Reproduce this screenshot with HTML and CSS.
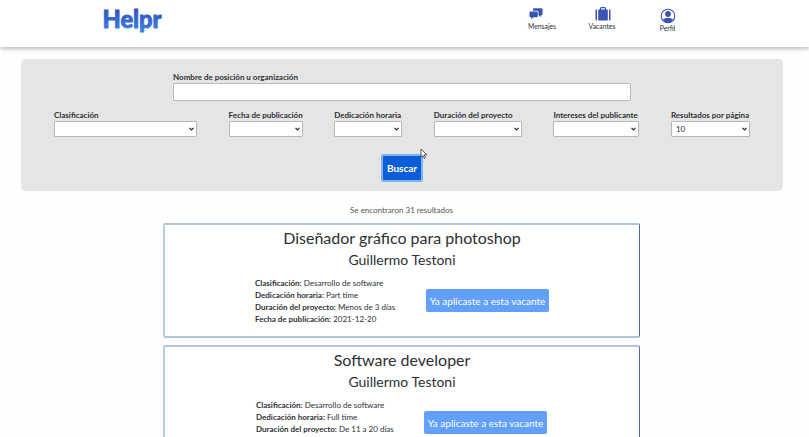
FILE: index.html
```html
<!DOCTYPE html>
<html lang="es">
<head>
<meta charset="utf-8">
<title>Helpr</title>
<link rel="stylesheet" href="styles.css">
</head>
<body>
<header class="header">
  <svg class="logo" width="64" height="32" viewBox="0 0 64 32">
    <defs><linearGradient id="brand" x1="0" y1="0" x2="0" y2="1"><stop offset="0.2" stop-color="#3450b8"/><stop offset="0.6" stop-color="#3767cf"/><stop offset="1" stop-color="#3e86e6"/></linearGradient></defs>
    <text x="1.500" y="22.500" textLength="59" lengthAdjust="spacingAndGlyphs" fill="url(#brand)" stroke="url(#brand)" stroke-width=".9">Helpr</text>
  </svg>
  <nav class="nav">
    <a class="nav-item messages">
      <svg width="14" height="12" viewBox="0 0 14 12"><path fill="#3953b5" d="M5 .3h7.500q1 0 1 1v5q0 1-1 1h-.7v2L9.700 7.300H9.500V4.200q0-1.400-1.400-1.400H4V1.300q0-1 1-1z"/><path fill="#3953b5" d="M1.500 3.500h6.300q1 0 1 1v3.700q0 1-1 1H4.500L2.300 11.300V9.200h-.8q-1 0-1-1V4.500q0-1 1-1z"/></svg>
      <span>Mensajes</span>
    </a>
    <a class="nav-item jobs">
      <svg width="16" height="14" viewBox="0 0 16 14"><path fill="none" stroke="#3953b5" stroke-width="1.200" d="M5.500 3V1.700q0-1 1-1h3q1 0 1 1V3"/><path fill="#3953b5" d="M2 2.500v11h-.5Q.5 13.500.5 12.500v-9q0-1 1-1zM3.200 2.500h9.600v11H3.200zM14 2.500h.5q1 0 1 1v9q0 1-1 1H14z"/></svg>
      <span>Vacantes</span>
    </a>
    <a class="nav-item profile">
      <svg width="16" height="16" viewBox="0 0 16 16"><circle cx="8" cy="8" r="6.800" fill="none" stroke="#3953b5" stroke-width="1.100"/><circle cx="8" cy="6" r="2.900" fill="#3953b5"/><path fill="#3953b5" d="M2.800 12Q4.500 9.800 8 9.800t5.200 2.200Q11.500 14.800 8 14.800T2.800 12z"/></svg>
      <span>Perfil</span>
    </a>
  </nav>
</header>
<main>
  <form class="search">
    <label class="query"><span>Nombre de posición u organización</span><input type="text"></label>
    <div class="filters">
      <label class="field w-class"><span>Clasificación</span><span class="select"><svg viewBox="0 0 5 4"><path d="M.5.8l2 2 2-2"/></svg></span></label>
      <label class="field w-date"><span>Fecha de publicación</span><span class="select"><svg viewBox="0 0 5 4"><path d="M.5.8l2 2 2-2"/></svg></span></label>
      <label class="field w-hours"><span>Dedicación horaria</span><span class="select"><svg viewBox="0 0 5 4"><path d="M.5.8l2 2 2-2"/></svg></span></label>
      <label class="field w-length"><span>Duración del proyecto</span><span class="select"><svg viewBox="0 0 5 4"><path d="M.5.8l2 2 2-2"/></svg></span></label>
      <label class="field w-interest"><span>Intereses del publicante</span><span class="select"><svg viewBox="0 0 5 4"><path d="M.5.8l2 2 2-2"/></svg></span></label>
      <label class="field w-page"><span>Resultados por página</span><span class="select">10<svg viewBox="0 0 5 4"><path d="M.5.8l2 2 2-2"/></svg></span></label>
    </div>
    <button type="button" class="submit">Buscar</button>
  </form>
  <p class="count">Se encontraron 31 resultados</p>
  <section class="results">
    <article class="card">
      <h2>Diseñador gráfico para photoshop</h2>
      <h3>Guillermo Testoni</h3>
      <div class="detail">
        <ul>
          <li><b>Clasificación:</b> Desarrollo de software</li>
          <li><b>Dedicación horaria:</b> Part time</li>
          <li><b>Duración del proyecto:</b> Menos de 3 días</li>
          <li><b>Fecha de publicación:</b> 2021-12-20</li>
        </ul>
        <button type="button" class="applied">Ya aplicaste a esta vacante</button>
      </div>
    </article>
    <article class="card second">
      <h2>Software developer</h2>
      <h3>Guillermo Testoni</h3>
      <div class="detail">
        <ul>
          <li><b>Clasificación:</b> Desarrollo de software</li>
          <li><b>Dedicación horaria:</b> Full time</li>
          <li><b>Duración del proyecto:</b> De 11 a 20 días</li>
        </ul>
        <button type="button" class="applied">Ya aplicaste a esta vacante</button>
      </div>
    </article>
  </section>
</main>
<svg class="pointer" width="8" height="12" viewBox="0 0 8 12"><path d="M1 1v8.200l1.900-1.800 1.300 3 1.300-.6-1.300-2.900h2.600z" fill="#fff" stroke="#333" stroke-width=".8"/></svg>
</body>
</html>
```
FILE: styles.css
```css
* { box-sizing: border-box; }
html { overflow: hidden; }
body { margin: 0; height: 437px; overflow: hidden; background: #fefefe; color: #2c3034; font: 8px/12px Lato, sans-serif; }
main { height: 390px; overflow: hidden; }
button { font-family: inherit; border: 0; padding: 0; color: #fff; }

.header { position: relative; height: 47px; display: flex; justify-content: space-between; padding: 5px 133px 0 101px; background: #fff; box-shadow: 0 2px 4px rgba(0, 0, 0, .25); }
.logo { font: 900 25px Lato, sans-serif; }
.nav { display: flex; }
.nav-item { display: flex; flex-direction: column; align-items: center; font-size: 6.8px; line-height: 9px; }
.messages { width: 28px; padding-top: 3px; margin-right: 32px; }
.messages svg { margin: 0 13px 2px 0; }
.jobs { width: 28px; padding-top: 2px; margin-right: 43px; }
.jobs svg { margin: 0 0 1px 2px; }
.profile { width: 17px; padding-top: 3px; }

.search { width: 762px; height: 132px; margin: 12px 0 0 21px; padding: 12px 33px 0; border-radius: 5px; background: #e5e5e5; display: flex; flex-direction: column; font-weight: 700; }
.query { display: flex; flex-direction: column; width: 458px; margin-left: 119px; }
.query input { height: 18px; border: 1px solid #b9bdb8; border-radius: 1px; background: #fff; }
.filters { display: flex; justify-content: space-between; margin-top: 8px; }
.field { display: flex; flex-direction: column; white-space: nowrap; }
.select { display: flex; align-items: center; height: 16px; padding: 0 2px 0 4px; border: 1px solid #b5b8b5; border-radius: 1px; background: #fff; font-weight: 400; }
.select svg { width: 5px; height: 4px; margin-left: auto; fill: none; stroke: #222; stroke-width: 1.2; }
.w-class { width: 143px; }
.w-date { width: 74px; }
.w-hours { width: 68px; }
.w-length { width: 88px; }
.w-interest { width: 86px; }
.w-page { width: 79px; }
.submit { align-self: center; width: 38px; height: 24px; margin-top: 19px; background: #0b5ed7; box-shadow: 0 0 0 2px #82b1f2; border-radius: 1px; font-size: 10px; font-weight: 700; }

.count { margin: 13px 0 7px; padding-right: 6px; text-align: center; line-height: 12px; color: #555; }
.results { width: 477px; margin-left: 163px; display: flex; flex-direction: column; gap: 7px; }
.card { height: 115px; border: 2px solid #b0c4da; border-left-color: #b0d0e0; border-right: 1px solid #4a6fac; border-radius: 2px; padding-top: 3px; background: #fff; }
.card h2 { margin: 0; font-size: 16px; line-height: 20px; font-weight: 400; text-align: center; }
.card h3 { margin: 2px 0 0; font-size: 14px; line-height: 20px; font-weight: 400; text-align: center; }
.detail { display: flex; margin: 7px 0 0 90px; }
.detail ul { width: 171px; margin: 0; padding: 0; list-style: none; white-space: nowrap; }
.applied { width: 123px; height: 23px; margin-top: 12px; border-radius: 2px; background: #62a0fb; font-size: 10px; white-space: nowrap; }
.second .detail { margin-left: 91px; }
.second ul { width: 168px; }

.pointer { position: absolute; left: 420px; top: 148px; }
```
